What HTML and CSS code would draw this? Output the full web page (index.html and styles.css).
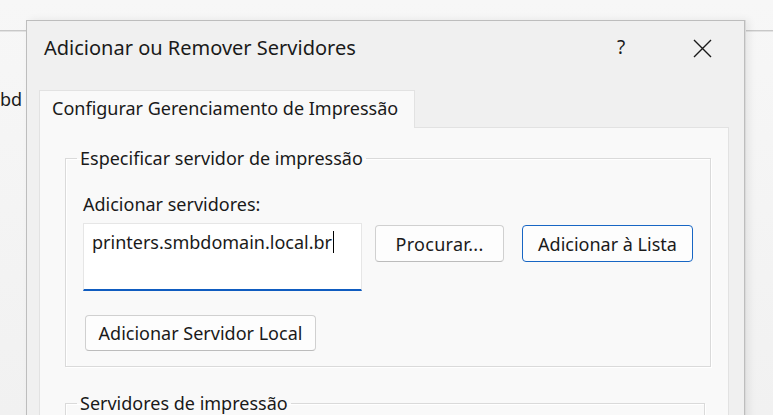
FILE: index.html
```html
<!DOCTYPE html>
<html>
<head>
<meta charset="utf-8">
<link rel="stylesheet" href="styles.css">
</head>
<body>
<div class="desk">
  <div class="backwin">
    <div class="backwin-top"></div>
    <div class="backwin-text">bd</div>
  </div>
  <div class="dialog">
    <div class="titlebar">
      <span class="title">Adicionar ou Remover Servidores</span>
      <span class="help">?</span>
      <svg class="close" width="19" height="19" viewBox="0 0 19 19"><path d="M1 1L18 18M18 1L1 18" stroke="#1a1a1a" stroke-width="1.4" fill="none"/></svg>
    </div>
    <div class="tabs">
      <div class="tab">Configurar Gerenciamento de Impressão</div>
    </div>
    <div class="panel">
      <fieldset class="group">
        <legend>Especificar servidor de impressão</legend>
        <div class="label">Adicionar servidores:</div>
        <div class="row">
          <div class="input"><span>printers.smbdomain.local.br</span><span class="caret"></span></div>
          <button class="btn btn-browse">Procurar...</button>
          <button class="btn btn-default">Adicionar à Lista</button>
        </div>
        <button class="btn btn-local">Adicionar Servidor Local</button>
      </fieldset>
      <fieldset class="group group2">
        <legend>Servidores de impressão</legend>
      </fieldset>
    </div>
  </div>
</div>
</body>
</html>
```
FILE: styles.css
```css
* { box-sizing: border-box; }
html, body { margin: 0; padding: 0; }
body {
  width: 773px;
  height: 415px;
  overflow: hidden;
  background: #f3f3f3;
  font-family: "Noto Sans", "Open Sans", sans-serif;
  color: #1a1a1a;
}
.desk {
  position: relative;
  width: 773px;
  height: 415px;
  overflow: hidden;
  background: linear-gradient(#f7f7f7, #f1f1f1);
}
.backwin {
  padding-top: 30px;
}
.backwin-top {
  height: 2px;
  background: #c8c8c8;
  border-bottom: 1px solid #e2e2e2;
}
.backwin-text {
  margin-top: 55px;
  margin-left: 0;
  font-size: 18px;
  line-height: 24px;
  color: #1a1a1a;
}
.dialog {
  position: absolute;
  left: 26px;
  top: 20px;
  width: 719px;
  height: 420px;
  background: #f0f0f0;
  border: 1px solid #bdbdbd;
  border-bottom: none;
  box-shadow: 1px 0 0 #dadada, 4px 0 8px rgba(0,0,0,0.07);
}
.titlebar {
  display: flex;
  align-items: center;
  height: 54px;
  padding-left: 17px;
}
.title {
  font-size: 20px;
  color: #1a1a1a;
  flex: 1;
  padding-bottom: 2px;
}
.help {
  font-size: 19px;
  width: 20px;
  margin-right: 56px;
  color: #1a1a1a;
  padding-bottom: 2px;
}
.close {
  margin-right: 32px;
}
.tabs {
  display: flex;
  padding-left: 12px;
  margin-top: 15px;
}
.tab {
  height: 38px;
  width: 376px;
  padding-left: 12px;
  padding-top: 5px;
  font-size: 18px;
  line-height: 24px;
  color: #1a1a1a;
  background: #f9f9f9;
  border: 1px solid #e2e2e2;
  border-bottom: none;
  position: relative;
  z-index: 1;
  margin-bottom: -1px;
}
.panel {
  margin-left: 12px;
  width: 690px;
  height: 300px;
  background: #f9f9f9;
  border: 1px solid #e2e2e2;
  padding: 18px 16px 0 25px;
}
.group {
  margin: 0;
  padding: 0 0 15px 17px;
  width: 646px;
  border: 1px solid #dadada;
  box-shadow: inset 1px 1px 0 #ffffff, 1px 1px 0 #ffffff;
}
.group legend {
  margin-left: -6px;
  padding: 0 3px 0 3px;
  font-size: 18px;
  color: #1a1a1a;
  line-height: 24px;
}
.label {
  font-size: 18px;
  margin-top: 22px;
  line-height: 24px;
}
.row {
  display: flex;
  align-items: flex-start;
  margin-top: 7px;
}
.input {
  width: 279px;
  height: 68px;
  background: #ffffff;
  border: 1px solid #e6e6e6;
  border-bottom: 2px solid #0f5cc0;
  padding: 6px 0 0 8px;
  font-size: 18px;
  line-height: 24px;
  display: flex;
  align-items: flex-start;
}
.caret {
  display: inline-block;
  width: 1px;
  height: 22px;
  background: #000;
  margin-left: 1px;
  margin-top: 1px;
}
.btn {
  font-family: inherit;
  font-size: 18px;
  color: #1a1a1a;
  background: #fdfdfd;
  border: 1px solid #d0d0d0;
  border-bottom-color: #bcbcbc;
  border-radius: 4px;
  height: 37px;
  padding: 0 6px;
  margin: 0;
  line-height: 24px;
}
.btn-browse {
  margin-left: 13px;
  margin-top: 2px;
  width: 129px;
  letter-spacing: 0.3px;
}
.btn-default {
  margin-left: 18px;
  margin-top: 2px;
  width: 171px;
  border: 1px solid #1866c4;
}
.btn-local {
  display: block;
  margin-top: 24px;
  margin-left: 2px;
  width: 231px;
  height: 36px;
}
.group2 {
  margin-top: 24px;
  height: 80px;
  width: 640px;
}
```
